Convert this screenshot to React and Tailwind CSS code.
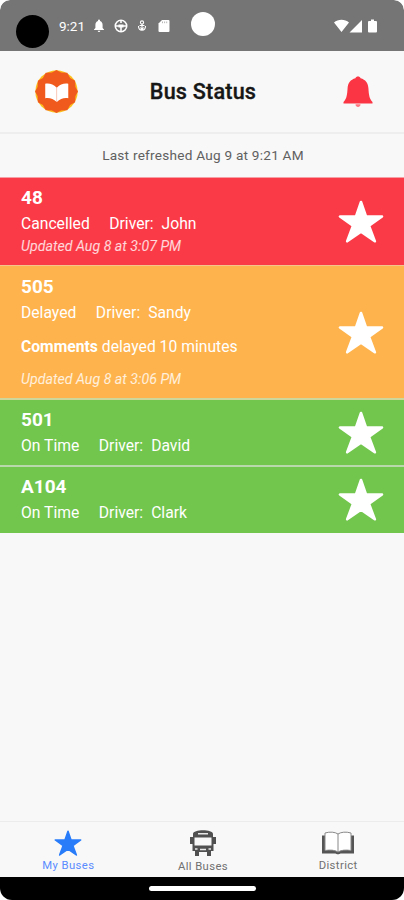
import React from 'react';

const buses = [
  { id: '48', status: 'Cancelled', driver: 'John', updated: 'Aug 8 at 3:07 PM', box: 'h-[87px] bg-[#fb3a47] pt-[8px]', star: 'mt-[-8px]' },
  { id: '505', status: 'Delayed', driver: 'Sandy', comments: 'delayed 10 minutes', updated: 'Aug 8 at 3:06 PM', box: 'h-[133px] bg-[#feb34c] pt-[9px] border-t border-[#f5c48c]', star: 'mt-[-9px]' },
  { id: '501', status: 'On Time', driver: 'David', box: 'h-[67px] bg-[#72c64d] pt-[8px] border-t-2 border-[#cdd79c]', star: 'mt-[-9px]' },
  { id: 'A104', status: 'On Time', driver: 'Clark', box: 'h-[68px] bg-[#72c64d] pt-[8px] border-t-2 border-[#b9d9ac]', star: 'mt-[-10px]' },
];

const Star = ({ className }) => (
  <svg viewBox="0 0 46 43" className={className} fill="currentColor" stroke="currentColor" strokeWidth="2.6" strokeLinejoin="round">
    <path d="M23 2 28 16.500H44L31 25.800 36.800 41.300 23 31.700 9.200 41.300 15 25.800 2 16.500H18Z" />
  </svg>
);

const StatusBar = () => (
  <div className="h-[51px] bg-[#757575] rounded-t-[10px] flex items-start text-white shrink-0">
    <div className="w-[33px] h-[33px] rounded-full bg-black ml-4 mt-[15px]" />
    <span className="text-[13.5px] leading-4 ml-[10px] mt-[18px] w-[28px] whitespace-nowrap">9:21</span>
    <svg viewBox="0 0 12 14" className="w-3 h-[14px] ml-[6px] mt-[19px]" fill="currentColor">
      <path d="M6 .5a1 1 0 0 1 1 1v.4c1.700.5 2.600 2 2.600 4V9L11 10.500V11H1v-.5L2.400 9V5.900c0-2 .9-3.500 2.600-4v-.4a1 1 0 0 1 1-1ZM4.700 11.700h2.600a1.300 1.300 0 0 1-2.600 0Z" />
    </svg>
    <svg viewBox="0 0 14 14" className="w-[14px] h-[14px] ml-[9px] mt-[19px]" fill="none" stroke="currentColor" strokeWidth="1.6">
      <circle cx="7" cy="7" r="5.700" />
      <path d="M1 7h12M7 7v5.500M7 1.500V4" />
      <path d="M4.500 5.500h5v3h-5Z" fill="currentColor" stroke="none" />
    </svg>
    <svg viewBox="0 0 10 14" className="w-[10px] h-[14px] ml-[9px] mt-[19px]" fill="none" stroke="currentColor" strokeWidth="1.1">
      <circle cx="5" cy="3.500" r="1.600" />
      <path d="M5 5v6M1.500 7c0 5.500 7 5.500 7 0M2.500 6.500l5 0M3.300 8.500 5 10.500l1.700-2" />
    </svg>
    <svg viewBox="0 0 12 14" className="w-3 h-[14px] ml-[11px] mt-[19px]" fill="currentColor">
      <path d="M4 1h6.500a1 1 0 0 1 1 1v10a1 1 0 0 1-1 1h-9a1 1 0 0 1-1-1V4.500Z" />
      <path d="M4.500 2.500v1.700M6.600 2.500v1.700M8.700 2.500v1.700" stroke="#a5a5a5" strokeWidth=".8" />
    </svg>
    <div className="w-6 h-6 rounded-full bg-white ml-[21px] mt-3" />
    <svg viewBox="0 0 46 16" className="w-[46px] h-4 ml-[118px] mt-[18px]" fill="currentColor">
      <path d="M1 4.500C5 .8 12 .8 16 4.500L8.500 14ZM16.500 14.500 29 2v12.500Z" />
      <path d="M36 3h2V1.500h3V3h2a1 1 0 0 1 1 1v9.500a1 1 0 0 1-1 1h-7a1 1 0 0 1-1-1V4a1 1 0 0 1 1-1Z" />
    </svg>
  </div>
);

const Header = () => (
  <header className="h-[83px] flex items-center pl-[35px] pr-[31px] border-b-2 border-[#eeeeee] shrink-0">
    <svg viewBox="0 0 42 42" className="w-[43px] h-[43px]">
      <circle cx="21" cy="21" r="20.700" fill="#fcc01d" />
      <path d="M21 0 25.500 2.500 31.500 2.800 34.300 7.700 39.200 10.500 39.500 16.500 42 21 39.500 25.500 39.200 31.500 34.300 34.300 31.500 39.200 25.500 39.500 21 42 16.500 39.500 10.500 39.200 7.700 34.300 2.800 31.500 2.500 25.500 0 21 2.500 16.500 2.800 10.500 7.700 7.700 10.500 2.800 16.500 2.500Z" fill="#f05a1c" />
      <path d="M10 13.500c4-.7 8 .5 11 3.500v14c-3-3-7-4.300-11-3.500ZM32.500 13.500c-4-.7-8 .5-11 3.500v14c3-3 7-4.300 11-3.500Z" fill="#fff" />
      <path d="M21.200 17v14" stroke="#f9d9cf" />
    </svg>
    <h1 className="flex-1 pr-[15px] text-center text-[21.6px] font-medium text-[#171717] leading-7 tracking-[0.2px] whitespace-nowrap [-webkit-text-stroke:0.35px_#171717]">Bus Status</h1>
    <svg viewBox="0 0 30 34" className="w-[30px] h-[34px]" fill="#fb3543">
      <path d="M15 1.500c1.200 0 2.200.7 2.600 1.700C22.500 4.500 25 8 25.400 13c.5 7 .8 10.500 4.100 14v1.500H.5V27C3.800 23.500 4.100 20 4.600 13 5 8 7.500 4.500 12.400 3.200c.4-1 1.400-1.700 2.600-1.700Z" />
      <path d="M12.500 29.200h5c0 3.600-5 3.600-5 0Z" fill="#ff7780" />
    </svg>
  </header>
);

const BusRow = ({ bus }) => (
  <div className={`flex justify-between pl-[21px] pr-[20px] text-white ${bus.box}`}>
    <div className="whitespace-nowrap">
      <div className="text-[19px] font-bold leading-6">{bus.id}</div>
      <div className="text-[15.7px] leading-[27px] flex">
        <span>{bus.status}</span>
        <span className="ml-[19.5px]">Driver:</span>
        <span className="ml-2">{bus.driver}</span>
      </div>
      {bus.comments && (
        <div className="text-[15.7px] leading-5 mt-[11px] mb-[13px]">
          <b>Comments</b> {bus.comments}
        </div>
      )}
      {bus.updated && <div className="text-[14.2px] italic leading-[19px] text-white/80">Updated {bus.updated}</div>}
    </div>
    <Star className={`w-[46px] h-[43px] self-center ${bus.star}`} />
  </div>
);

const BusIcon = () => (
  <svg viewBox="0 0 28 28" className="w-7 h-7">
    <path d="M4 8V5c0-5 20-5 20 0v3h3v7h-2.500v7H22v5h-4v-4h-8v4H6v-5H3.500v-7H1V8Z" fill="#505050" />
    <path d="M5.500 8.500h17v8h-17Z" fill="#f8f8f8" />
    <path d="M9 4.700h10M11 20.500h6M6 20h2.500M19.500 20H22" stroke="#e8e8e8" strokeWidth="1.5" />
  </svg>
);

const BookIcon = () => (
  <svg viewBox="0 0 34 24" className="w-[34px] h-6" fill="#fff" stroke="#888" strokeWidth="1">
    <path d="M1 4.500h32V22.500H19.500c-1 1-4 1-5 0H1Z" fill="#555" stroke="none" />
    <path d="M4 2c5-1.500 10-1 13 1 3-2 8-2.500 13-1v17.500c-5-.8-10-.5-13 1.500-3-2-8-2.300-13-1.500Z" />
    <path d="M17 3v18" />
  </svg>
);

const TabBar = () => (
  <nav className="h-[56px] border-t border-[#ececec] grid grid-cols-3 text-[11.3px] leading-[14px] tracking-[0.4px] text-[#707070] shrink-0">
    <div className="flex flex-col items-center pl-[2px] text-[#5b8cff]">
      <Star className="w-7 h-[26px] mt-[8px] mb-[3px] text-[#287cfa]" />
      My Buses
    </div>
    <div className="flex flex-col items-center pl-[2px]">
      <div className="mt-[7px] mb-[3px]"><BusIcon /></div>
      All Buses
    </div>
    <div className="flex flex-col items-center pl-[3px]">
      <div className="mt-[9px] mb-[4px]"><BookIcon /></div>
      District
    </div>
  </nav>
);

const App = () => {
  return (
    <div className="w-[404px] h-[900px] bg-white font-['Roboto',sans-serif]">
      <div className="h-full flex flex-col bg-[#f8f8f8] rounded-t-[10px] rounded-b-[12px] overflow-hidden">
        <StatusBar />
        <Header />
        <div className="h-[44px] flex items-center justify-center pl-[2px] text-[13.6px] tracking-[0.24px] text-[#606060] shrink-0 border-b border-[#f6a0a6]">
          Last refreshed Aug 9 at 9:21 AM
        </div>
        <main className="flex-1">
          {buses.map((bus) => (
            <BusRow key={bus.id} bus={bus} />
          ))}
        </main>
        <TabBar />
        <div className="h-[23px] bg-black flex justify-center pt-[9px] shrink-0">
          <div className="w-[107px] h-[5px] rounded-full bg-white" />
        </div>
      </div>
    </div>
  );
};

export default App;
